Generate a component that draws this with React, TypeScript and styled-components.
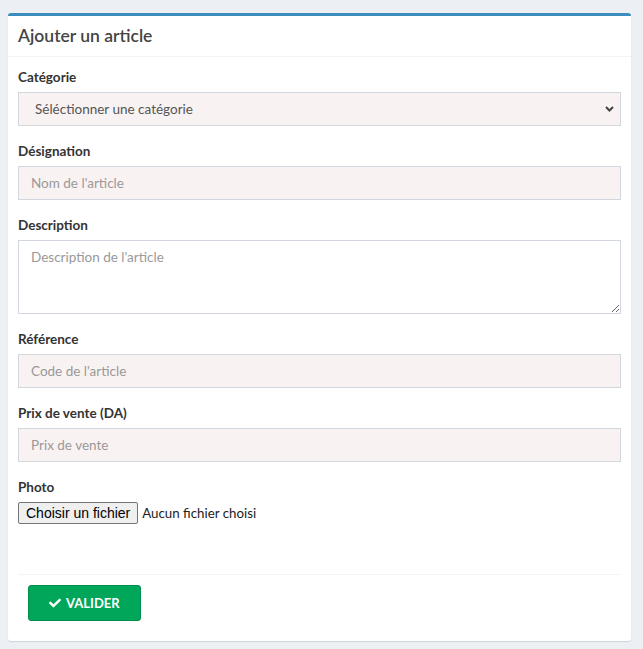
import styled, { createGlobalStyle } from 'styled-components';

/* -------- Global -------- */
const GlobalStyle = createGlobalStyle`
  html, body {
    margin: 0;
    padding: 0;
    background: #ecf0f5;
  }
  body {
    font-family: Lato, "Liberation Sans", sans-serif;
    font-size: 13.5px;
    color: #333;
  }
  * {
    box-sizing: border-box;
  }
`;

/* -------- Styled Components -------- */
const Page = styled.div`
  padding: 13px 12px 8px 8px;
`;

const Box = styled.div`
  background: #fff;
  border-top: 3px solid #3c8dbc;
  border-radius: 3px;
  box-shadow: 0 1px 1px rgba(0, 0, 0, 0.12);
`;

const BoxHeader = styled.div`
  padding: 10px;
  border-bottom: 1px solid #f4f4f4;
`;

const BoxTitle = styled.h3`
  margin: 0;
  font-size: 17.5px;
  line-height: 20px;
  font-weight: 600;
  color: #444;
`;

const BoxBody = styled.div`
  padding: 10px;
`;

const FormGroup = styled.div<{ last?: boolean }>`
  margin-bottom: ${props => props.last ? '50px' : '15px'};
`;

const Label = styled.label`
  display: block;
  font-weight: 700;
  line-height: 20px;
  margin-bottom: 5px;
  color: #333;
`;

const fieldStyles = `
  display: block;
  width: 100%;
  border: 1px solid #d2d6de;
  border-radius: 0;
  font-family: Lato, "Liberation Sans", sans-serif;
  font-size: 13.5px;
  color: #555;
  outline: none;
  &::placeholder {
    color: #999;
  }
`;

const Input = styled.input`
  ${fieldStyles}
  height: 34px;
  padding: 6px 12px;
  background: #f9f2f2;
`;

const TextArea = styled.textarea`
  ${fieldStyles}
  height: 74px;
  padding: 6px 12px;
  background: #fff;
  resize: vertical;
  line-height: 20px;
`;

const SelectWrap = styled.div`
  position: relative;
`;

const Select = styled.select`
  ${fieldStyles}
  height: 34px;
  padding: 6px 12px 6px 16px;
  background: #f9f2f2;
  appearance: none;
  -webkit-appearance: none;
`;

const Chevron = styled.svg`
  position: absolute;
  right: 7px;
  top: 14px;
  width: 9px;
  height: 6px;
  pointer-events: none;
`;

const FileRow = styled.div`
  display: flex;
  align-items: center;
  gap: 4px;
  height: 22px;
`;

const FileButton = styled.button`
  height: 22px;
  padding: 1px 7px;
  font-family: "Liberation Sans", Arial, sans-serif;
  font-size: 14px;
  color: #000;
  background: #efefef;
  border: 1px solid #767676;
  border-radius: 2px;
`;

const FileText = styled.span`
  font-size: 13.3px;
  color: #222;
`;

const BoxFooter = styled.div`
  border-top: 1px solid #f4f4f4;
  padding: 10px;
`;

const SubmitButton = styled.button`
  display: inline-flex;
  align-items: center;
  gap: 5px;
  height: 36px;
  padding: 0 20px;
  background: #00a65a;
  border: 1px solid #008d4c;
  border-radius: 3px;
  color: #fff;
  font-family: Lato, "Liberation Sans", sans-serif;
  font-size: 13px;
  font-weight: 700;
  text-transform: uppercase;
  & svg {
    width: 12px;
    height: 12px;
  }
`;

function App() {
  return (
    <Page>
      <GlobalStyle />
      <Box>
        <BoxHeader>
          <BoxTitle>Ajouter un article</BoxTitle>
        </BoxHeader>
        <BoxBody>
          <FormGroup>
            <Label>Catégorie</Label>
            <SelectWrap>
              <Select defaultValue="">
                <option value="">Séléctionner une catégorie</option>
              </Select>
              <Chevron viewBox="0 0 9 6">
                <path d="M1 1 L4.5 4.5 L8 1" fill="none" stroke="#444" strokeWidth="2" />
              </Chevron>
            </SelectWrap>
          </FormGroup>
          <FormGroup>
            <Label>Désignation</Label>
            <Input placeholder="Nom de l'article" />
          </FormGroup>
          <FormGroup>
            <Label>Description</Label>
            <TextArea placeholder="Description de l'article" />
          </FormGroup>
          <FormGroup>
            <Label>Référence</Label>
            <Input placeholder="Code de l'article" />
          </FormGroup>
          <FormGroup>
            <Label>Prix de vente (DA)</Label>
            <Input placeholder="Prix de vente" />
          </FormGroup>
          <FormGroup last>
            <Label>Photo</Label>
            <FileRow>
              <FileButton>Choisir un fichier</FileButton>
              <FileText>Aucun fichier choisi</FileText>
            </FileRow>
          </FormGroup>
          <BoxFooter>
            <SubmitButton>
              <svg viewBox="0 0 512 512">
                <path fill="#fff" d="M173.9 439.4L7.5 273c-10-10-10-26.2 0-36.2l36.2-36.2c10-10 26.2-10 36.2 0L192 312.7 432.1 72.6c10-10 26.2-10 36.2 0l36.2 36.2c10 10 10 26.2 0 36.2L210.1 439.4c-10 10-26.2 10-36.2 0z" />
              </svg>
              Valider
            </SubmitButton>
          </BoxFooter>
        </BoxBody>
      </Box>
    </Page>
  );
}

export default App;
